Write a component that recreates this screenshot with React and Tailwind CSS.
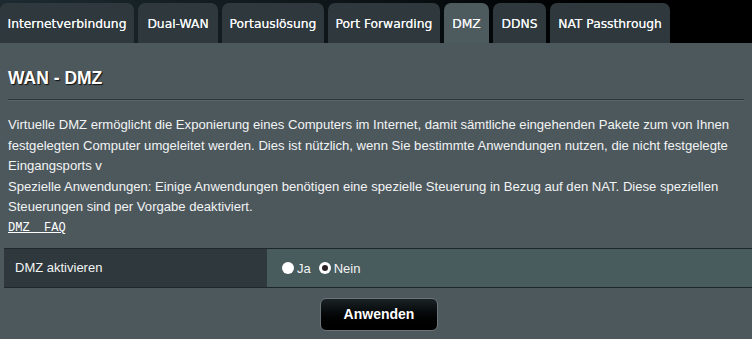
import React from "react";

const tabs = [
  { label: "Internetverbindung", w: "w-[134px]" },
  { label: "Dual-WAN", w: "w-[80px]" },
  { label: "Portauslösung", w: "w-[102px]" },
  { label: "Port Forwarding", w: "w-[112px]" },
  { label: "DMZ", w: "w-[45px]", active: true },
  { label: "DDNS", w: "w-[53px]" },
  { label: "NAT Passthrough", w: "w-[120px]" },
];

export default function App() {
  return (
    <div className="w-[752px] h-[339px] overflow-hidden bg-[#4d585d] font-['Liberation_Sans',Arial,sans-serif]">
      <div className="h-[43px] flex items-end gap-[4px] bg-gradient-to-r from-[#1d2b30] via-[#0c1316] to-black">
        {tabs.map((t) => (
          <div
            key={t.label}
            className={`${t.w} h-[40px] rounded-t-[7px] flex items-center justify-center pt-[2px] text-[12.3px] text-[#f3f5f6] [text-shadow:0_0_0.5px_#fff] font-['DejaVu_Sans',Verdana,sans-serif] ${
              t.active ? "bg-[#4d5a5e]" : "bg-[#2f393d]"
            }`}
          >
            {t.label}
          </div>
        ))}
      </div>
      <div className="px-[8px] pt-[24px]">
        <div className="text-[17.5px] font-bold text-white [text-shadow:1px_1px_1px_#111] leading-[22px] h-[22px]">
          WAN - DMZ
        </div>
        <div className="mt-[10px] h-[2px] border-t border-[#2d3538] border-b-[#5a6569] border-b" />
        <div className="mt-[14px] text-[13.1px] leading-[20.6px] text-[#f2f4f4]">
          Virtuelle DMZ ermöglicht die Exponierung eines Computers im Internet, damit sämtliche eingehenden Pakete zum von Ihnen festgelegten Computer umgeleitet werden. Dies ist nützlich, wenn Sie bestimmte Anwendungen nutzen, die nicht festgelegte Eingangsports v
          <br />
          Spezielle Anwendungen: Einige Anwendungen benötigen eine spezielle Steuerung in Bezug auf den NAT. Diese speziellen Steuerungen sind per Vorgabe deaktiviert.
        </div>
        <div className="mt-[1px] leading-[18px] text-[12px] font-['Liberation_Mono',monospace] text-white underline whitespace-pre">
          DMZ  FAQ
        </div>
      </div>
      <div className="ml-[4px] mt-[11px] h-[40px] flex border-y border-[#1e282c]">
        <div className="w-[263px] bg-[#2f383c] flex items-center pl-[11px] text-[13px] text-[#f2f4f4]">
          DMZ aktivieren
        </div>
        <div className="flex-1 bg-[#485b5d] flex items-center pl-[15px] text-[13px] text-[#f2f4f4] pt-[2px]">
          <span className="w-[12px] h-[12px] rounded-full bg-white inline-block mr-[3px] -mt-[2px]" />
          <span>Ja</span>
          <span className="ml-[8px] w-[12px] h-[12px] rounded-full bg-white inline-flex items-center justify-center mr-[3px] -mt-[2px]">
            <span className="w-[6px] h-[6px] rounded-full bg-[#2a2224]" />
          </span>
          <span>Nein</span>
        </div>
      </div>
      <div className="flex justify-center mt-[10px] pl-[6px]">
        <div className="w-[118px] h-[33px] rounded-[6px] border border-[#6b7579] bg-gradient-to-b from-[#1b2326] to-black flex items-center justify-center text-[14px] font-bold text-white [text-shadow:1px_1px_1px_#000]">
          Anwenden
        </div>
      </div>
    </div>
  );
}
